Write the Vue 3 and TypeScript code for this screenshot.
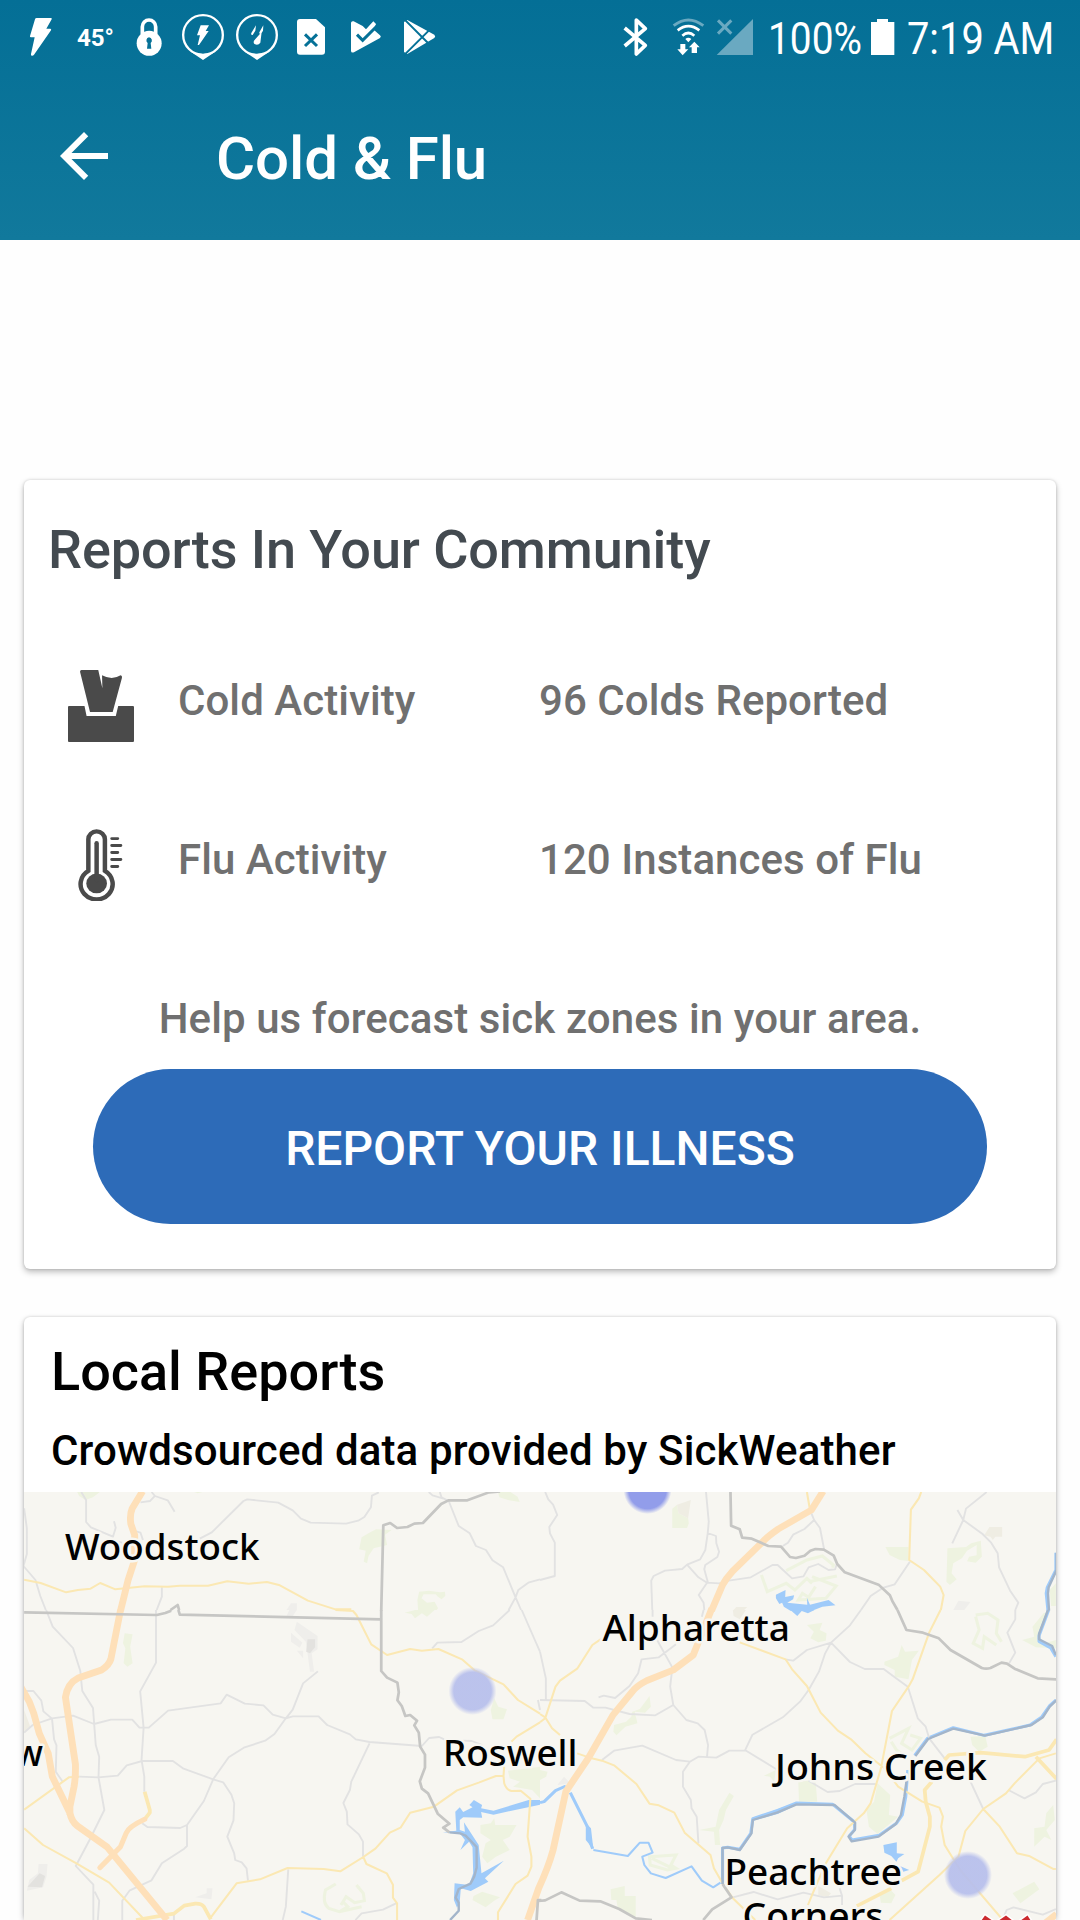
<script setup lang="ts">
type Layer =
  | 'park' | 'golf' | 'sand' | 'urban' | 'urbanDark'
  | 'road' | 'artery' | 'arteryWide' | 'freeway' | 'ramp'
  | 'lake' | 'stream' | 'river' | 'county' | 'bank'

interface Tile {
  x: number
  y: number
  shapes: Partial<Record<Layer, string>>
}

interface Place {
  name: string
  x: number
  y: number
  length: number
}

interface Activity {
  kind: 'cold' | 'flu'
  label: string
  value: string
}

const activities: Activity[] = [
  { kind: 'cold', label: 'Cold Activity', value: '96 Colds Reported' },
  { kind: 'flu', label: 'Flu Activity', value: '120 Instances of Flu' },
]

const layers: Layer[] = [
  'park', 'golf', 'sand', 'urban', 'urbanDark',
  'lake', 'stream', 'river', 'road', 'artery', 'arteryWide',
  'freeway', 'ramp', 'county', 'bank',
]

// Map geometry, four tiles; each tile has its own local coordinate space.
const tiles: Tile[] = [
  {
    x: 0,
    y: 1300,
    shapes: {
      park: 'M224 576H290L270 592L248 600L230 588ZM564 576H588L574 580ZM1050 712L1075 697L1092 688L1137 690L1118 704L1124 735L1085 745L1070 768L1066 790L1056 785L1062 752L1043 748ZM1446 576H1482L1503 590L1509 606L1478 601L1450 592ZM1217 875L1245 872L1278 877L1292 875L1293 888L1282 898L1270 889L1265 883H1230L1224 895L1240 908L1262 905L1272 925L1268 930H1214L1212 900Z',
      urban: 'M845 910H862V930H832Z',
      road: 'M70 625L78 685V762L68 798L103 840L117 888L133 930M236 576L250 600V666L264 682L328 710L336 683L331 664M408 607L436 603L450 588L440 576M450 588L487 601L507 635M395 694L408 698L415 720M340 724L355 728M580 716L615 697L707 603L718 598L808 608L850 631L874 656L902 668L1005 671L1040 662L1058 651L1077 622L1080 587L1100 577M1245 576L1256 586L1288 596M1277 576L1282 592L1303 603L1332 678L1364 700L1382 738L1411 750L1430 781L1461 802L1497 892L1513 930M1568 838L1534 848L1505 870L1497 892L1477 930M470 862V890L455 930',
      artery: 'M70 839L118 849L192 877L226 870L263 866L291 849L335 868L420 859L488 860L522 857H604L660 844L722 851L775 846L810 855L894 902L974 928H1020',
      freeway: 'M414 574L384 625Q376 645 380 672L391 705V780L372 840L350 932',
      county: 'M1452 574L1420 577L1357 601H1302L1281 612L1228 669L1203 671L1183 681L1153 684L1133 669L1113 676L1107 932M495 930L516 915L520 930',
    },
  },
  {
    x: 540,
    y: 1300,
    shapes: {
      park: 'M384 626L398 614L402 640L430 655L432 670L427 684H384ZM1003 741H1070V783L1045 780L1015 765ZM1183 745L1237 741L1252 730L1280 722L1283 770L1265 788L1240 784L1246 770L1268 766V735L1240 752L1225 775L1200 790L1195 820L1210 838L1190 855L1180 845ZM1480 870L1498 850V918H1484Z',
      golf: 'M643 825L660 875L715 850L740 870L775 835L790 850M715 812L775 780L820 768L852 795L850 803M780 845L862 828M790 830L860 858L830 895L750 900L762 880L780 892L800 860',
      sand: 'M398 614L438 600L430 655L402 640ZM1305 681H1342V710H1322L1315 720L1308 710L1290 706ZM570 921H602L590 932H560Z',
      urban: 'M1215 902L1250 906L1232 930H1200Z',
      lake: 'M685 884L713 870L712 891L738 886L735 898L718 908L776 914L775 893L784 914L838 900L858 916L820 920L790 932H727L708 920L703 908L695 912L685 895Z',
      river: 'M1498 758V810L1473 862L1470 880L1475 932',
      bank: 'M1500 758V810L1477 862L1475 880L1478 932',
      road: 'M15 576L24 598L38 614L50 645L27 681L29 700L43 728V828L0 840M482 576L490 665L487 700L480 750L465 778L427 794L413 807L363 812L330 828L323 842L326 930M487 699L511 708L512 730L520 755L515 771L480 795L477 808L487 845L461 885L475 908L477 930M427 794L460 832L485 848L520 850L548 842L612 832L675 795H690L732 835L765 829L780 802L808 792L838 810L857 808L862 792M788 640L796 660L813 684L825 748M796 660L768 687L735 704L720 728L705 738M1074 785L1030 853L995 864L960 888L932 930M1297 576L1237 626L1229 660L1197 730M1212 630L1229 660L1285 702L1310 728L1329 760L1333 802L1365 872L1389 908L1380 930',
      artery: 'M775 576L784 630M1107 576L1100 595L1077 629L1072 780L1115 810L1162 860L1172 885L1164 930',
      freeway: 'M822 574L788 630L692 687Q660 710 648 724L558 815Q540 835 530 855L498 932',
      county: 'M553 574L555 677L580 688L587 713L615 716L663 738L700 740L726 771L743 774L768 767L785 752L800 747L824 749L853 767L863 792L885 817L983 854L1016 886L1024 905L1038 930',
    },
  },
  {
    x: 0,
    y: 1610,
    shapes: {
      park: 'M362 70L385 73L378 110L385 160L370 170L359 160L364 115L357 100ZM1175 8L1205 0H1262L1240 20L1225 10L1205 25L1195 12ZM1435 265L1447 290L1472 298L1462 328H1430L1425 300ZM1475 482L1568 470V565L1545 540L1490 530L1510 515L1480 505ZM1395 645L1425 640L1435 625L1438 645H1500L1480 680L1460 690L1480 720L1440 740L1415 760L1400 740L1410 700L1425 690L1395 670ZM1375 858L1400 845L1452 862L1435 872L1410 892L1372 870Z',
      golf: 'M975 822L945 840Q935 880 955 895L985 905L1010 890L995 875M1035 825L1055 850L1058 872L1030 878L1005 860L990 885M985 905L1050 890',
      sand: 'M70 300L88 350L70 368Z',
      urban: 'M862 35L922 78V118L905 130L912 185H900L893 130L888 95L855 60ZM845 68L878 98L870 113L845 95ZM862 122H880V145ZM840 0H862L850 18H832ZM112 762H138L135 800L125 832L78 842L85 810L110 790ZM600 835H617L614 868L567 862L600 850Z',
      urbanDark: 'M893 88H915V112L900 130L889 125ZM115 790L131 798L122 832L80 830Z',
      lake: 'M1568 570H1535L1433 602L1397 595L1400 585L1376 570L1363 585L1372 592L1345 606L1335 592L1322 605L1325 662L1286 667L1335 670L1350 690L1337 720L1362 695L1372 712L1374 790L1362 825L1320 820L1318 870L1327 893L1335 875L1338 835L1367 843L1418 815L1408 805L1463 752L1398 790L1390 705L1347 637L1350 665L1335 660V630L1345 622L1400 623L1397 606L1433 614L1568 584Z',
      stream: 'M875 904L932 930',
      road: 'M134 0L153 50L212 114L233 182L239 243L270 294L278 405L288 440L286 502L303 600L260 690L220 768L271 824V930M275 845L288 872L284 930M453 0V158L407 244L417 353L411 450L419 500V545M70 243H97L120 272L126 304L151 326L157 388L164 406L162 485L182 515M70 368L95 345L151 325L212 317L273 342L322 329H384L405 353H432L488 302L641 280L658 254L711 281L765 286L792 314L830 325L850 319H925L950 345L1016 373L1033 388L1073 396L1225 408L1246 384L1275 381L1290 388M1345 392L1370 393L1400 405M923 184L880 220L850 299L830 325L797 372L770 392L708 413L664 442L619 508L592 573L543 645V708L535 716L470 760L440 811L377 841L355 872V930M230 500L286 502L342 497L368 466L413 453H502L533 476L619 508L648 517L672 554L680 580L678 631L660 680L680 730L683 750L702 757L716 775L720 812M413 640L428 651L523 654L543 645M1073 400L1020 515L1016 540L997 579L1007 605L1009 643L1042 673L1054 695V740M837 778L830 890L821 930M1032 930L1050 910L1112 899L1150 880M1480 0L1432 46L1390 63L1340 96L1270 98L1255 115M1515 0L1553 90L1568 125M505 911V930M1562 270L1568 300',
      artery: 'M974 0L1025 3L1035 15L1078 103L1124 135L1191 117L1225 122L1273 117L1343 149L1378 181L1462 223L1504 270L1568 311M70 599L200 502L230 500M70 655L125 705L222 760L317 818L420 930M610 925L687 820L755 808L835 774L940 777L988 784L1055 741L1090 716L1132 668L1163 653L1191 608L1260 590L1327 541L1390 518L1440 498H1462L1464 520Q1470 540 1485 543L1512 542L1540 566L1532 680L1543 740V770L1532 797L1497 822L1446 907V930M1055 741L1064 762L1123 790L1141 824V863L1153 880V930M1485 395L1500 380L1568 337M1464 470L1462 498',
      arteryWide: 'M395 930L505 911L535 887L567 881Q585 880 592 890L612 928M420 628L435 608V600L420 545',
      freeway: 'M350 0L322 147Q317 165 295 180L227 204Q196 220 190 262L219 463Q220 500 215 530L203 590V615M60 230L85 275L98 310L114 370L140 430L152 500L203 609Q208 635 225 648L311 711L485 930',
      ramp: 'M290 773L350 710L367 668Q375 650 420 628',
      county: 'M70 7L455 15L480 9L497 2M518 0L522 14L1107 28M1107 0V183L1124 203L1154 218L1158 247L1154 271L1167 289L1177 318L1191 315L1211 332L1203 346L1216 368L1220 410L1234 434V473L1219 514L1225 536L1243 550L1271 611L1305 641L1287 653L1305 667M1572 870H1562L1558 930',
      bank: 'M1305 667L1336 670L1352 677L1384 711V773L1377 800L1366 821L1332 837L1323 863L1332 878V902L1307 930',
    },
  },
  {
    x: 540,
    y: 1610,
    shapes: {
      park: 'M775 45L820 38L812 60L832 70L830 92L808 97L785 85L795 65ZM1050 105L1060 125L1100 122L1080 150L1070 208L1030 200V180L1000 165V155L1040 140ZM318 258L322 290L305 308L275 305L283 340L248 350L222 376L213 365L215 345L250 335L265 320L268 305L290 297ZM750 515L800 510L805 575H752ZM980 520L1017 555L1013 615L1040 620L980 672L955 650L948 600L970 575ZM550 548L563 558L540 600L533 630L520 660L523 705H508L505 665L462 660L510 650L520 600ZM205 838L246 828V858H278V922L225 890L222 870H207ZM1372 850L1435 815L1450 838L1395 880ZM1250 380L1293 378L1300 410L1275 425L1255 405ZM1400 90L1435 80L1430 50L1462 10L1477 5L1450 80L1465 100L1498 90V115L1440 112ZM1013 835L1032 855L1020 880L990 878L985 850ZM1435 655L1465 650L1470 610L1490 585L1495 630L1470 660L1485 690L1465 680L1435 710ZM0 480L22 485L18 500L0 510ZM650 497L685 480L680 515L668 500Z',
      golf: 'M1265 15L1300 10L1330 30L1325 70L1340 95M1265 20L1275 60L1258 100L1285 115L1290 80L1325 105M1015 385L1070 355L1050 400L1080 420L1105 385L1075 375M1020 395L1035 420L1070 445M318 740L395 735L380 765L395 775L370 780L320 765ZM325 745L385 775',
      sand: 'M808 828L845 850L835 862L808 855ZM560 0H598L580 28L562 18Z',
      urban: 'M70 500L88 520L50 525Z',
      lake: 'M727 0L747 18L760 3L778 10L797 0ZM997 705L1036 697V730L1058 732L1040 745L1035 755L1020 738L1000 728ZM1045 768L1072 780L1055 785ZM133 640L148 655L155 718L133 690ZM618 625L745 577L750 583L690 612L618 632Z',
      stream: 'M155 720L255 738L290 698H315L327 728L297 740L303 765L322 790L365 804L440 769L470 812L503 832L524 818',
      river: 'M0 578L12 575L45 542L75 528M88 548L140 655L143 690L153 716M1498 270L1480 287L1456 322L1423 345L1290 376L1200 353L1125 385L1088 436M1068 480L1062 560L1052 615L1035 640L985 676L906 690L898 678L914 658L913 636L850 583L745 579L690 601L618 626L612 670L580 718L545 712L530 714V822M1477 0L1449 77V94L1483 114L1498 140',
      bank: 'M1500 270L1480 290L1460 322L1427 345L1292 377L1200 356L1127 387L1090 438M1066 500L1058 560L1048 615L1033 642L983 680L905 694L896 680L914 660L915 638L855 585L745 583L690 607L618 630L614 670L580 720L545 712L530 714V822M1475 0L1449 72V88L1487 108L1498 135',
      road: 'M327 0V20M475 0L470 20M340 90L383 170V185L378 230L387 285L425 330L458 340L478 360L488 405L485 440M387 285L335 316L260 312L190 293H155L130 273L0 270M17 270V205L0 125M170 262L185 257L218 264L260 228L285 190L295 148L345 142L395 103M180 450L215 422L297 407L395 450L435 455L460 440L512 443L550 422H595L617 374L705 322L755 275L780 240L810 185L828 130L845 98L900 46L932 0M435 455L415 485V530L438 570L440 595L455 620L460 700M712 148L735 152L775 120L845 98L900 156L943 177H998L1030 202L1068 230L1097 325L1120 350L1130 385L1175 445M1250 515L1287 597M595 420L690 480M780 512L835 546L870 543L915 522H975M1380 0V28L1357 68L1380 128L1362 160M1360 540L1407 565L1440 547L1460 522L1498 512M560 862L620 846L690 868L765 848L825 862L877 857V885M870 835L877 857M1345 925L1355 900L1375 892L1460 914L1498 897',
      artery: 'M180 85L152 105L108 176L58 212L45 230L15 325L0 337M0 312L15 322L35 355L58 375M580 97L713 148L732 178L775 228L815 308L865 362L903 388L945 430L1000 475L1040 530L1110 575L1160 593L1170 620L1165 650L1175 705L1220 780L1340 925M1163 0L1130 68L1082 208L1070 230L1022 303L990 475L960 580L940 610L892 655L830 760L800 830L778 885M108 430L150 445L180 452L215 466L280 522L318 581L345 586L390 608L420 668L495 735L505 775L530 820L560 865L625 930M1498 430L1450 445L1378 520L1353 550L1287 597L1235 663L1215 740L1160 795L1015 930M1287 597L1335 650L1385 730L1420 738L1490 777H1498',
      arteryWide: 'M1175 450L1188 435L1280 428L1408 440L1478 420L1500 388M1138 515L1117 540L1120 575L1132 620V650L1098 785L1050 812M1020 835L920 888M1440 440L1500 507',
      freeway: 'M499 -5L478 50L445 135L387 180L310 212Q280 228 268 245L212 315L140 445L75 545L38 720Q25 770 -4 835L-36 930M1500 912L1460 945',
      county: 'M1038 0L1064 60L1112 68L1158 85L1192 120L1283 174Q1295 178 1308 174L1340 158L1356 161L1378 176L1445 205L1500 208M530 822L556 862L500 898L474 930M-6 873L15 871L62 847L115 872L175 874L230 897L278 925L325 930',
    },
  },
]

const hotspots = [
  { x: 647.5, y: 1490, tone: 'strong' },
  { x: 472.5, y: 1691, tone: 'soft' },
  { x: 968, y: 1875, tone: 'soft' },
]

const places: Place[] = [
  { name: 'w', x: 14.5, y: 1766, length: 28.5 },
  { name: 'Woodstock', x: 65, y: 1560, length: 194.5 },
  { name: 'Alpharetta', x: 602.5, y: 1640.5, length: 187.5 },
  { name: 'Roswell', x: 443, y: 1766, length: 134.5 },
  { name: 'Johns Creek', x: 775, y: 1780, length: 212 },
  { name: 'Peachtree', x: 724.5, y: 1884.5, length: 177.5 },
  { name: 'Corners', x: 742.5, y: 1928.5, length: 141 },
]
</script>

<template>
  <div class="screen">
    <header class="top">
      <div class="status">
        <svg class="status-left" viewBox="0 0 1380 216">
          <g fill="#fff">
            <path d="M110 54H152Q157 54 155 58L139 86H151Q155 87 153 91L102 164Q99 168 95 167Q92 166 93 162L104 112H93Q89 112 90 108L105 58Q106 54 110 54Z" />
            <text x="231" y="137" font-size="73" font-weight="700" textLength="111" lengthAdjust="spacingAndGlyphs">45°</text>
            <path class="line" d="M427 102V80a20 20 0 0 1 40 0V102" stroke-width="11" />
            <circle cx="447.500" cy="130" r="37.500" />
            <path class="hole" d="M447 112a9.500 9.500 0 0 1 5 17L454 146H441L443 129A9.500 9.500 0 0 1 447 112Z" />
            <circle class="line" cx="609" cy="105" r="59.500" stroke-width="7" />
            <path d="M570 154L609 180L648 154Q609 170 570 154Z" />
            <path d="M602 76H627L617 93H626L597 135H593L600 106H591Z" />
            <circle class="line" cx="771" cy="105" r="59.500" stroke-width="7" />
            <path d="M732 154L771 180L810 154Q771 170 732 154Z" />
            <path d="M768 76L766 92L758 105Q752 106 754 99ZM790 76L789 92L783 102Q777 103 778 97ZM785 96L781 128Q775 137 765 133Q758 128 763 121Z" />
            <path d="M900 57H948L975 82V155Q975 164 966 164H900Q891 164 891 155V66Q891 57 900 57Z" />
            <path class="cut" d="M915 103L951 138M951 103L915 138" stroke-width="9" />
            <path d="M1053 68Q1054 62 1061 64L1088 78L1098 88L1120 64L1128 72L1122 90L1140 106Q1145 110 1140 114L1062 157Q1053 160 1053 152Z" />
            <path class="cut" d="M1071 104L1088 121L1131 78" stroke-width="9" />
            <path d="M1212 66L1222 60L1303 104Q1308 109 1303 114L1222 162L1212 156Z" />
            <path class="cut" d="M1211 56L1290 135M1211 167L1290 88" stroke-width="6" />
          </g>
        </svg>
        <svg class="status-right" viewBox="0 0 1440 216">
          <path class="line" d="M74 84L136 136L109 162V60L136 86L74 138" stroke-width="11" stroke-linejoin="round" />
          <path class="line faint" d="M221 77Q265 43 310 77" stroke-width="9" />
          <path class="line" d="M233 91Q265 66 298 91M247 107Q265 91 283 107" stroke-width="8" />
          <path fill="#fff" d="M256 117Q265 110 274 117L265 127ZM241 132H256V148H265L248 166L232 148H241ZM283 125L299 142H291V159H275V142H267Z" />
          <path fill="#6aa9c1" d="M350 165L459 57V165Z" />
          <path class="line faint" d="M354 61L394 101M394 61L354 101" stroke-width="9" />
          <g fill="#fff" font-size="135">
            <text x="504" y="162" textLength="282" lengthAdjust="spacingAndGlyphs">100%</text>
            <path d="M831 57H864V66H883V165H813V66H831Z" />
            <text x="921" y="162" textLength="442" lengthAdjust="spacingAndGlyphs">7:19 AM</text>
          </g>
        </svg>
      </div>
      <div class="appbar">
        <svg class="back" viewBox="0 0 24 24">
          <path fill="#fff" d="M20 11H7.830l5.590-5.590L12 4l-8 8 8 8 1.410-1.410L7.830 13H20v-2z" />
        </svg>
        <h1>Cold &amp; Flu</h1>
      </div>
    </header>

    <main>
      <section class="card community">
        <h2>Reports In Your Community</h2>
        <div v-for="item in activities" :key="item.kind" class="activity">
          <svg v-if="item.kind === 'cold'" class="tissue" viewBox="197 630 192 216" preserveAspectRatio="none">
            <path d="M200 738H245L251 768H336L343 738H386Q389 738 389 741V843Q389 846 386 846H200Q197 846 197 843V741Q197 738 200 738Z" />
            <path d="M236 630H285L297 685L296 646Q325 662 350 646Q355 647 354 653L327 756H261L232 635Q232 630 236 630Z" />
          </svg>
          <svg v-else class="thermometer" viewBox="227 1106 129 217" preserveAspectRatio="none">
            <path class="ink" d="M257 1232V1137a24 24 0 0 1 48 0V1232A46.500 46.500 0 1 1 257 1232Z" stroke-width="13" />
            <circle cx="281" cy="1270" r="30" />
            <path class="ink" d="M281 1149V1260" stroke-width="13" />
            <path class="ink" d="M325 1135H342M325 1156H351M325 1177H342M325 1198H351M325 1219H342" stroke-width="9" />
          </svg>
          <span>{{ item.label }}</span>
          <span>{{ item.value }}</span>
        </div>
        <p>Help us forecast sick zones in your area.</p>
        <button type="button">REPORT YOUR ILLNESS</button>
      </section>

      <section class="card local">
        <h2>Local Reports</h2>
        <h3>Crowdsourced data provided by SickWeather</h3>
        <svg class="map" viewBox="24 1492 1032 428">
          <defs>
            <radialGradient id="strong">
              <stop offset="0.78" stop-color="#929dea" />
              <stop offset="1" stop-color="#929dea" stop-opacity="0" />
            </radialGradient>
            <radialGradient id="soft">
              <stop offset="0.78" stop-color="#b7bfec" stop-opacity="0.93" />
              <stop offset="1" stop-color="#b7bfec" stop-opacity="0" />
            </radialGradient>
          </defs>
          <g v-for="layer in layers" :key="layer" :class="layer">
            <path
              v-for="(tile, i) in tiles"
              :key="i"
              :d="tile.shapes[layer] ?? ''"
              :transform="`translate(${tile.x} ${tile.y}) scale(0.34439 0.33333)`"
            />
          </g>
          <circle v-for="(spot, i) in hotspots" :key="i" :cx="spot.x" :cy="spot.y" r="24" :fill="`url(#${spot.tone})`" />
          <path class="shield" d="M981 1921L985 1915.500L993 1921Z M998 1921L1006 1915.500L1013 1921Z M1020 1921L1027.500 1915.500L1031 1921Z" />
          <g class="places">
            <text
              v-for="place in places"
              :key="place.name"
              :x="place.x"
              :y="place.y"
              :textLength="place.length"
              lengthAdjust="spacingAndGlyphs"
            >{{ place.name }}</text>
          </g>
        </svg>
      </section>
    </main>
  </div>
</template>

<style>
body {
  margin: 0;
  background: #fefefe;
}
</style>

<style scoped>
.screen {
  width: 1080px;
  height: 1920px;
  overflow: hidden;
  background: #fefefe;
  font-family: Roboto, "Liberation Sans", sans-serif;
}
h1, h2, h3, p {
  margin: 0;
  font-weight: 500;
  white-space: nowrap;
}
svg {
  display: block;
  flex: none;
}
.top {
  height: 240px;
  background: linear-gradient(#046f96, #11799c);
}
.status {
  display: flex;
  justify-content: space-between;
  height: 72px;
}
.status-left {
  width: 460px;
  height: 72px;
}
.status-right {
  width: 480px;
  height: 72px;
}
.line {
  fill: none;
  stroke: #fff;
}
.faint {
  stroke: #6aa9c1;
}
.cut {
  fill: none;
  stroke: #057197;
}
.hole {
  fill: #057197;
}
.appbar {
  display: flex;
  align-items: center;
  gap: 96px;
  height: 168px;
  padding-left: 48px;
}
.back {
  width: 72px;
  height: 72px;
}
h1 {
  padding-top: 5px;
  color: #fff;
  font-size: 60px;
  line-height: 70px;
  letter-spacing: -0.12px;
}
main {
  display: flex;
  flex-direction: column;
  gap: 48px;
  padding: 240px 24px 0;
}
.card {
  box-sizing: border-box;
  border-radius: 6px;
  background: #fff;
  box-shadow: 0 3px 6px rgba(0, 0, 0, 0.26), 0 0 3px rgba(0, 0, 0, 0.16);
}
.community {
  display: flex;
  flex-direction: column;
  height: 789px;
  padding-top: 38px;
}
h2 {
  font-size: 54px;
  line-height: 64px;
}
.community h2 {
  margin: 0 0 88px 24px;
  color: #434a50;
  letter-spacing: -0.1px;
}
.activity {
  display: grid;
  grid-template-columns: 110px 361px 1fr;
  height: 72px;
  margin-bottom: 87px;
  padding-left: 44px;
  color: #707070;
  font-size: 42px;
  font-weight: 500;
  line-height: 50px;
  letter-spacing: 0.06px;
}
.activity span {
  padding-top: 6px;
  white-space: nowrap;
}
.activity svg {
  fill: #4a4a4a;
}
.tissue {
  width: 66px;
  height: 72px;
}
.thermometer {
  width: 44.5px;
  height: 72px;
  margin-left: 10px;
}
.activity .ink {
  fill: none;
  stroke: #4a4a4a;
  stroke-linecap: round;
}
.community p {
  margin-top: 6px;
  color: #707070;
  font-size: 42px;
  line-height: 50px;
  letter-spacing: 0.09px;
  text-align: center;
}
button {
  width: 894px;
  height: 155px;
  margin: 25px auto 0;
  padding: 4px 0 0;
  border: 0;
  border-radius: 78px;
  background: #2d6bb8;
  color: #fff;
  font: 500 48px/56px Roboto, "Liberation Sans", sans-serif;
}
.local {
  height: 603px;
  padding-top: 23px;
  color: #000;
}
.local h2 {
  margin-left: 27px;
}
h3 {
  margin: 22px 0 16px 27px;
  font-size: 42px;
  line-height: 50px;
  letter-spacing: 0.13px;
}
.map {
  width: 1032px;
  height: 428px;
  background: #f7f6f1;
}
.park { fill: #eef3e0; }
.golf { fill: none; stroke: #eef3e0; stroke-width: 9; }
.sand { fill: #efede3; }
.urban { fill: #efeeeb; }
.urbanDark { fill: #e3e2df; }
.lake { fill: #9fcbfa; }
.road, .artery, .arteryWide, .freeway, .ramp, .stream, .river, .county, .bank {
  fill: none;
  stroke-linejoin: round;
}
.road { stroke: #e2e2e2; stroke-width: 5.5; }
.artery { stroke: #fbe8b3; stroke-width: 6; }
.arteryWide { stroke: #fbe8b3; stroke-width: 11; }
.freeway { stroke: #fee0b9; stroke-width: 20; }
.ramp { stroke: #fee0b9; stroke-width: 15; stroke-linecap: round; }
.stream { stroke: #9fcbfa; stroke-width: 6; }
.river { stroke: #9fcbfa; stroke-width: 9; }
.county { stroke: #c6c6c4; stroke-width: 8; }
.bank { stroke: #a3b5ca; stroke-width: 7; }
.shield {
  fill: #cb2a2e;
  stroke: #fff;
  stroke-width: 3;
  paint-order: stroke;
}
.places {
  fill: #000;
  stroke: #f7f6f1;
  stroke-width: 5px;
  stroke-linejoin: round;
  paint-order: stroke;
  font-family: "Noto Sans", "Open Sans", sans-serif;
  font-size: 36px;
  font-weight: 500;
}
</style>
